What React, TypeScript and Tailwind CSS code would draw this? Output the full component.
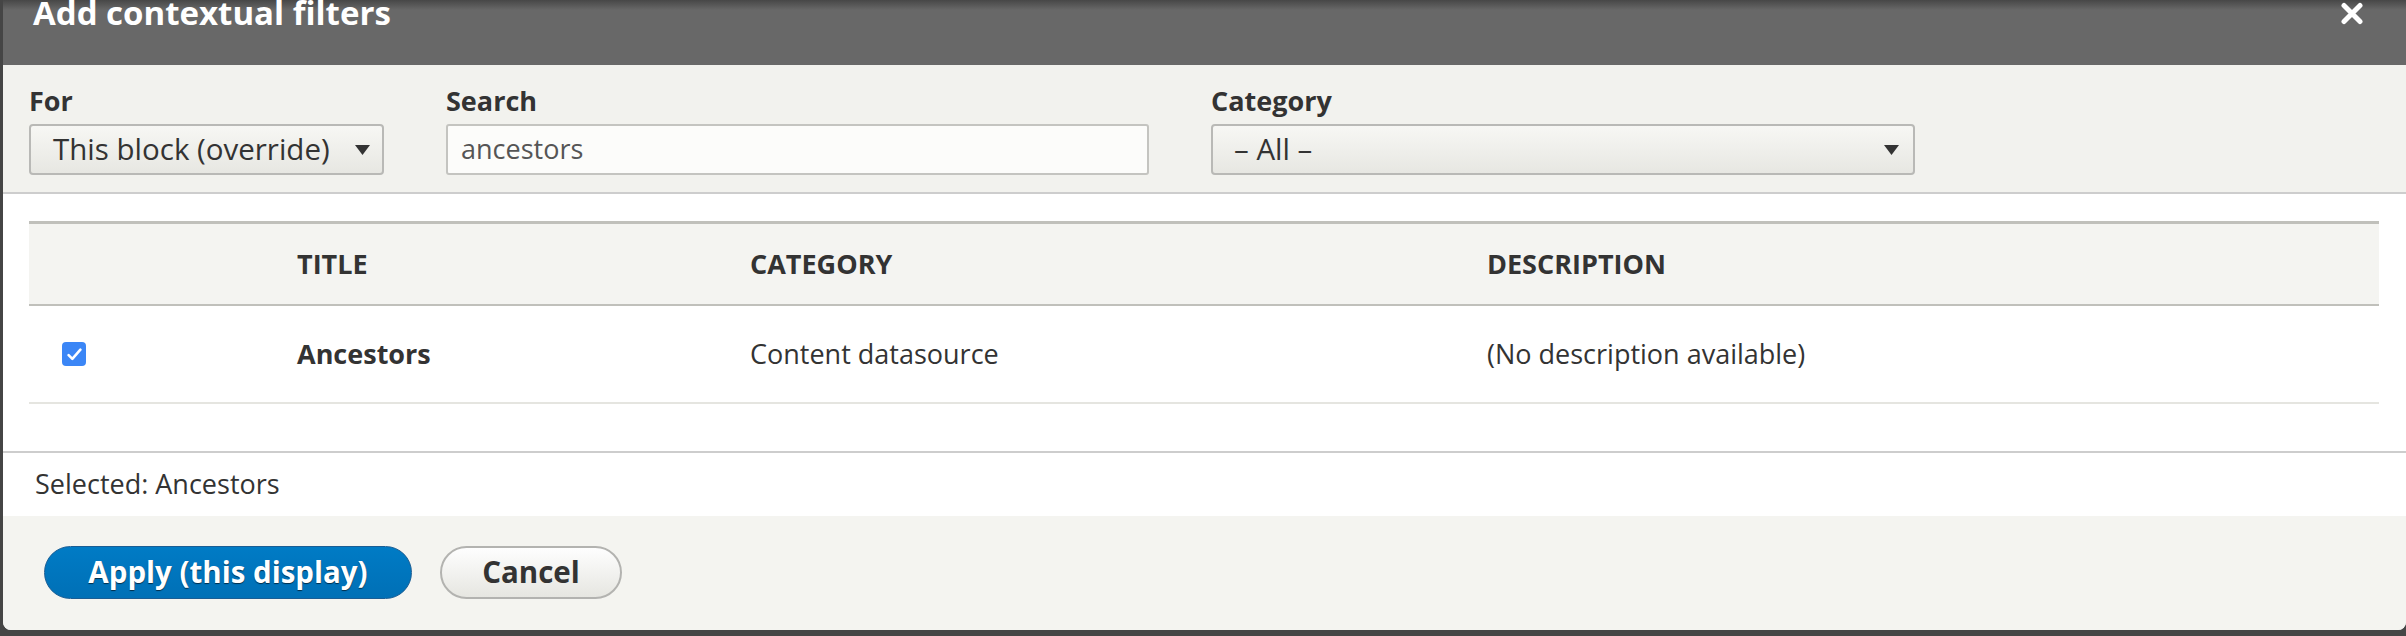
import { useState } from 'react'

// Drupal (Seven) "Add contextual filters" modal, clipped at the top
const rows = [
  { title: 'Ancestors', category: 'Content datasource', description: '(No description available)' },
]

function CloseIcon() {
  return (
    <svg width="24" height="23" viewBox="0 0 24 23" aria-hidden="true">
      <path d="M4 3.5 L20 19.5 M20 3.5 L4 19.5" stroke="#fff" strokeWidth="5" strokeLinecap="round" />
    </svg>
  )
}

function Caret() {
  return (
    <svg width="15" height="10" viewBox="0 0 15 10" aria-hidden="true">
      <path d="M0 0 H15 L7.5 10 Z" fill="#333" />
    </svg>
  )
}

function Checkbox({ checked }: { checked: boolean }) {
  return (
    <div
      className={
        checked
          ? 'w-[24px] h-[24px] rounded-[4px] bg-[#3b86f6] flex items-center justify-center'
          : 'w-[24px] h-[24px] rounded-[4px] border border-[#999] bg-white'
      }
    >
      {checked && (
        <svg width="15" height="13" viewBox="0 0 14 12" aria-hidden="true">
          <path d="M1.5 6.5 L5 10 L12.5 1.5" stroke="#fff" strokeWidth="2.4" fill="none" strokeLinecap="round" strokeLinejoin="round" />
        </svg>
      )}
    </div>
  )
}

export default function App() {
  const [search] = useState('ancestors')

  return (
    <div className="w-[2406px] h-[636px] bg-[#454545] overflow-hidden font-['Open_Sans',sans-serif] text-[#333]">
      <div className="ml-[3px] w-[2403px] h-[630px] rounded-b-[8px] overflow-hidden flex flex-col bg-white">
        {/* Title bar */}
        <div className="h-[65px] shrink-0 flex justify-between pl-[30px] pr-[42px] bg-[linear-gradient(to_bottom,#474747_0px,#686868_10px)]">
          <h1 className="text-[33px] leading-[26px] font-bold text-white">Add contextual filters</h1>
          <div className="pt-[2px]">
            <CloseIcon />
          </div>
        </div>

        {/* Filters */}
        <div className="shrink-0 bg-[#f2f2ee] border-b-2 border-[#cdcdcd] pl-[26px] pt-[20px] pb-[17px] flex gap-[62px]">
          <div className="flex flex-col">
            <label className="text-[27px] leading-[32px] font-bold mb-[7px]">For</label>
            <div className="w-[355px] h-[51px] rounded-[4px] border-2 border-[#b9b9b6] bg-[linear-gradient(to_bottom,#f7f7f4,#e7e7e2)] flex items-center justify-between pl-[22px] pr-[12px]">
              <span className="text-[29.5px]">This block (override)</span>
              <Caret />
            </div>
          </div>
          <div className="flex flex-col">
            <label className="text-[27px] leading-[32px] font-bold mb-[7px]">Search</label>
            <div className="w-[703px] h-[51px] rounded-[3px] border-2 border-[#c4c4c0] bg-[#fcfcfa] flex items-center pl-[13px]">
              <span className="text-[27px] text-[#555]">{search}</span>
            </div>
          </div>
          <div className="flex flex-col">
            <label className="text-[27px] leading-[32px] font-bold mb-[7px]">Category</label>
            <div className="w-[704px] h-[51px] rounded-[4px] border-2 border-[#b9b9b6] bg-[linear-gradient(to_bottom,#f7f7f4,#e7e7e2)] flex items-center justify-between pl-[21px] pr-[14px]">
              <span className="text-[29.5px]">– All –</span>
              <Caret />
            </div>
          </div>
        </div>

        {/* Table */}
        <div className="shrink-0 h-[257px] pt-[27px] px-[26px] pr-[27px]">
          <div className="border-t-[3px] border-[#c0c0bb]">
            <div className="grid grid-cols-[268px_453px_737px_1fr] h-[82px] items-center bg-[#f4f4f1] border-b-2 border-[#c0c0bb] text-[27px] font-bold uppercase">
              <div />
              <div>Title</div>
              <div>Category</div>
              <div>Description</div>
            </div>
            {rows.map((row) => (
              <div
                key={row.title}
                className="grid grid-cols-[268px_453px_737px_1fr] h-[98px] items-center border-b-2 border-[#e5e5e0] text-[27px]"
              >
                <div className="pl-[33px]">
                  <Checkbox checked />
                </div>
                <div className="font-bold">{row.title}</div>
                <div>{row.category}</div>
                <div>{row.description}</div>
              </div>
            ))}
          </div>
        </div>

        {/* Selection summary */}
        <div className="shrink-0 h-[65px] border-t-2 border-[#cdcdcd] flex items-center pl-[32px] text-[27px]">
          Selected: Ancestors
        </div>

        {/* Buttons */}
        <div className="flex-1 bg-[#f4f4f0] pt-[30px] pl-[41px] flex items-start gap-[28px]">
          <button className="w-[368px] h-[53px] rounded-full border border-[#1a5d94] bg-[linear-gradient(to_bottom,#007bc5,#0070b6)] text-white text-[29.5px] font-bold [text-shadow:0_1px_1px_rgba(0,0,0,0.6)]">
            Apply (this display)
          </button>
          <button className="w-[182px] h-[53px] rounded-full border-2 border-[#b3b3b0] bg-[linear-gradient(to_bottom,#fefefe,#e6e6e1)] text-[#333] text-[29.5px] font-bold">
            Cancel
          </button>
        </div>
      </div>
    </div>
  )
}
